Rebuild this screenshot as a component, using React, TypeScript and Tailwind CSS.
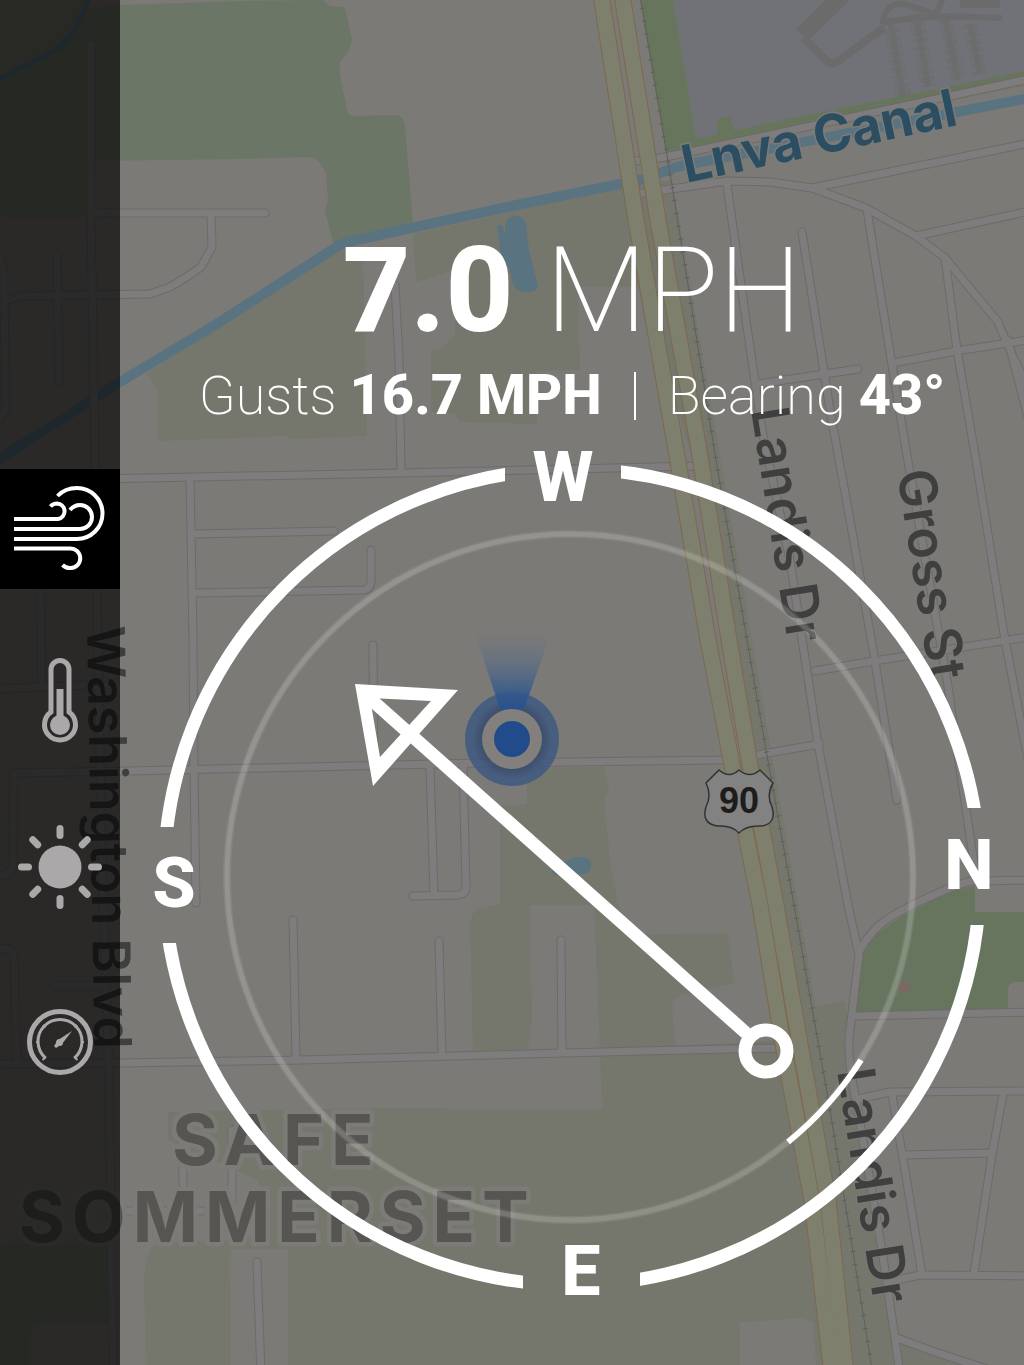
import type { ReactNode } from 'react';

const local = [
  'M91 44 L91 215 L95 460 L97 600 L103 900 L109 1080 L113 1365',
  'M92 216 Q96 212 110 213 L265 213',
  'M211 214 L212 247 L201 267 Q186 278 170 287 L150 294 L20 296 L4 301 L6 410 L-4 425',
  'M0 258 L4 275 L4 301',
  'M57 255 L59 382',
  'M395 285 L399 360 L401 472',
  'M97 479 L400 473 L695 466',
  'M190 478 L193 640 L194 770 L196 903',
  'M192 534 L334 531',
  'M192 593 L364 590 Q371 589 371 580 V550',
  'M373 645 L374 770',
  'M0 875 Q13 875 13 865 L14 773 L130 771 L480 763 L720 760 L745 757 L820 744',
  'M430 767 L434 895',
  'M463 766 L466 885 Q467 894 458 895 L413 896',
  'M293 920 L296 1058',
  'M439 941 L442 1056',
  'M561 940 L562 1052',
  'M-4 1064 L120 1063 L300 1060 L640 1051 L780 1048',
  'M257 1262 L261 1375',
  'M0 948 Q14 948 14 958 L17 1062',
  'M54 986 H104',
  'M40 588 L42 687 M-4 689 L94 685',
  'M182 1130 L183 1184 M232 1130 V1200 M128 1211 H202',
  'M635 161 L655 159 L690 152 L1034 78',
  'M636 194 L727 181 L770 182 L812 188 L866 208 L916 236 L945 258 L998 322 Q1007 345 1030 392',
  'M812 188 L1034 142',
  'M916 236 L1034 210',
  'M727 185 L746 320 L762 430 L790 560 L818 744 L848 905 L859 955 L850 1030 Q846 1052 856 1100 L882 1250 L895 1338 L900 1375',
  'M802 232 L830 410 L850 520 L874 655 L897 800',
  'M867 210 L892 365 L906 450 L947 680 L975 870',
  'M945 258 L957 350 L976 460 L1005 640 L1034 790',
  'M1008 340 L1030 425',
  'M758 384 L858 369',
  'M893 363 L956 351 L1034 339',
  'M815 671 L874 661 L1034 636',
  'M860 950 Q868 935 882 923 Q900 910 925 899 Q955 885 972 881 L1034 880',
  'M855 1016 L1034 1012',
  'M858 1099 L890 1092 L1034 1091',
  'M892 1095 L905 1170 L922 1275',
  'M1003 1094 L992 1155 L974 1273',
  'M904 1155 L992 1153',
  'M888 1282 L920 1275 L1034 1276',
  'M897 1338 L935 1352 L990 1370',
];

const highway = [
  'M601 -5 L636 220 L676 450 L708 640 L732 765 L760 905 L784 1050 L812 1200 L832 1375',
  'M622 -5 L658 220 L699 450 L729 640 L750 765 L776 905 L801 1050 L828 1200 L846 1375',
];

const rail = 'M640 -5 L672 185 L716 460 L766 750 L794 905 L830 1110 L873 1375';

const stalls = ['M890 20 L903 96', 'M916 14 L928 86', 'M945 18 L958 80', 'M970 24 L980 74'];

function MapLabel({ x, y, angle, children }: { x: number; y: number; angle: number; children: ReactNode }) {
  return <text transform={`translate(${x} ${y}) rotate(${angle})`}>{children}</text>;
}

function MapBackdrop() {
  return (
    <svg
      viewBox="0 0 1024 1365"
      preserveAspectRatio="xMidYMid slice"
      className="absolute inset-0 h-full w-full font-['Inter',sans-serif]"
      aria-label="Map"
    >
      <defs>
        <linearGradient id="beam" x1="0" y1="1" x2="0" y2="0">
          <stop offset="0" stopColor="#26508f" />
          <stop offset="0.25" stopColor="#34588c" stopOpacity="0.85" />
          <stop offset="0.6" stopColor="#50688a" stopOpacity="0.5" />
          <stop offset="1" stopColor="#66718a" stopOpacity="0" />
        </linearGradient>
        <radialGradient id="halo">
          <stop offset="0.6" stopColor="#334764" stopOpacity="0.9" />
          <stop offset="0.85" stopColor="#3b5782" stopOpacity="0.8" />
        </radialGradient>
      </defs>
      <rect width="1024" height="1365" fill="#7c7a76" />

      <g fill="#6c7667">
        <path d="M88 8 L120 5 L243 1 L323 0 L330 6 L345 7 L352 40 L348 52 L340 62 Q339 70 341 80 L347 110 Q348 116 356 116 L396 115 Q404 116 405 125 L413 224 L334 246 L325 210 L328 200 L326 173 L320 163 Q314 157 308 157 L240 159 L96 161 L92 217 L20 219 L0 215 V79 L60 46 L80 20 Z" />
        <path d="M0 1244 L111 1242 V1324 L42 1324 Q30 1326 29 1340 V1365 H0 Z" />
      </g>
      <g fill="#75776c">
        <path d="M0 0 H90 L78 22 L60 46 L0 79 Z" />
        <path d="M340 250 L363 256 L367 436 L293 439 L285 436 L160 441 Q157 441 157 430 L157 390 L147 373 Z" />
        <path d="M413 234 L625 186 L640 287 L578 287 L580 370 L537 371 V424 L460 422 L455 414 L431 412 V350 L441 349 L455 335 L455 270 L416 282 Z" />
        <path d="M527 768 L604 767 L609 790 L604 800 L610 860 L618 905 L627 935 L728 933 L734 983 L680 996 Q672 998 672 1008 L676 1046 L780 1040 L812 1007 L845 1001 L850 1040 L858 1100 L895 1365 H816 L813 1322 L800 1318 L765 1321 L740 1322 V1365 H288 V1249 H230 L231 1365 H146 L144 1280 Q146 1245 158 1243 L231 1240 L258 1236 V1180 L168 1140 V1112 L376 1108 L596 1110 Q602 1110 602 1104 L594 905 H530 L532 1020 L528 1049 L473 1051 L470 925 Q472 908 482 908 L500 904 V806 L527 804 Z" />
        <path d="M640 287 L625 186 L672 180 L720 455 L798 905 L834 1110 L874 1365 H845 L770 905 L690 450 Z" />
        <path d="M897 1342 L980 1370 H900 Z" />
      </g>

      <path d="M640 0 H1024 V86 L668 158 Z" fill="#77786a" />
      <path d="M640 0 H676 L698 138 L717 134 V119 L730 116 L734 130 L1024 71 V79 L698 146 L666 152 Z" fill="#67755c" />
      <path d="M673 0 H1024 V71 L734 130 L730 116 L717 119 V134 L696 139 Z" fill="#717277" />
      <g stroke="#6b6b6c" fill="none">
        <path d="M844 -6 L802 35" strokeWidth="17" />
        <path d="M804 38 L828 62 Q834 66 842 58 L884 28" strokeWidth="8" />
        <path d="M882 24 Q886 2 904 4 L936 14 L944 -4 M882 22 L940 16 L1002 18" strokeWidth="6" />
        <path d="M960 3 H1000" strokeWidth="10" />
        {stalls.map((d) => (
          <g key={d}>
            <path d={d} strokeWidth="6" opacity="0.8" />
            <path d={d} strokeWidth="15" strokeDasharray="5 3" opacity="0.5" />
          </g>
        ))}
      </g>

      <path d="M860 958 L875 935 L905 914 L950 892 L975 886 V912 H1024 V982 H1015 Q1008 983 1008 990 V1010 L855 1012 Z" fill="#67755f" />
      <path d="M899 984 L905 980 L911 987 L905 994 L897 989 Z" fill="#7a6a61" />

      <g fill="none" stroke="#5a7380">
        <path d="M-6 462 L45 430 L110 388 L215 325 L335 248 Q342 243 352 241 L512 206 L640 180 L680 166 L1034 97" strokeWidth="10" />
        <path d="M-4 81 L55 50 Q70 40 79 20 L92 -6" strokeWidth="5" />
      </g>
      <g fill="#5a7380">
        <path d="M497 226 Q500 223 503 227 L509 252 L508 268 L502 262 Z" />
        <path d="M505 226 Q506 217 516 216 Q524 216 526 224 L529 250 L538 286 Q538 291 530 292 Q516 294 512 282 L506 250 Z" />
        <path d="M552 868 L572 858 L584 857 Q592 858 591 866 Q591 873 584 874 L560 876 Q550 875 552 868 Z" />
      </g>

      <g fill="none" strokeLinecap="round" strokeLinejoin="round">
        {local.map((d) => (
          <path key={d} d={d} stroke="#6e6a68" strokeWidth="9" />
        ))}
        {local.map((d) => (
          <path key={d} d={d} stroke="#7e7c7d" strokeWidth="7" />
        ))}
      </g>

      <g fill="none" strokeLinejoin="round">
        {highway.map((d) => (
          <path key={d} d={d} stroke="#7d6850" strokeWidth="17" />
        ))}
        {highway.map((d) => (
          <path key={d} d={d} stroke="#7f7f6d" strokeWidth="15" />
        ))}
        <path d={rail} stroke="#5f5f5d" strokeWidth="1" />
        <path d={rail} stroke="#5f5f5d" strokeWidth="5" strokeDasharray="1 12" />
      </g>

      <g stroke="#7c7b77" strokeLinejoin="round">
        <g className="fill-[#2c4e62] text-[52px] font-bold [paint-order:stroke]" strokeWidth="3">
          <MapLabel x={686} y={183} angle={-12}>
            Lnva Canal
          </MapLabel>
        </g>
        <g className="fill-[#3f3f3f] text-[52px] font-semibold [paint-order:stroke]" strokeWidth="2">
          <MapLabel x={87} y={626} angle={89}>
            Washington Blvd
          </MapLabel>
          <MapLabel x={751} y={410} angle={81}>
            Landis Dr
          </MapLabel>
          <MapLabel x={897} y={472} angle={81}>
            Gross St
          </MapLabel>
          <MapLabel x={837} y={1071} angle={81}>
            Landis Dr
          </MapLabel>
        </g>
        <g className="fill-[#565552] text-[70px] font-bold tracking-widest [paint-order:stroke]" strokeWidth="9">
          <MapLabel x={172} y={1165} angle={0}>
            SAFE
          </MapLabel>
          <MapLabel x={19} y={1242} angle={0}>
            SOMMERSET
          </MapLabel>
        </g>
      </g>

      <path
        d="M719 770 Q729 779 739 770 Q750 779 760 770 L773 783 Q766 795 772 807 Q777 823 762 826 Q746 825 739 833 Q732 825 717 826 Q701 823 706 807 Q712 795 706 783 Z"
        fill="#828282"
        stroke="#333333"
        strokeWidth="1.5"
      />
      <text x="739" y="813" textAnchor="middle" className="fill-[#1d1d1d] font-['Liberation_Sans',sans-serif] text-[36px] font-bold">
        90
      </text>

      <circle cx="512" cy="739" r="47" fill="url(#halo)" />
      <path d="M501 712 L523 712 L552 630 H474 Z" fill="url(#beam)" />
      <circle cx="512" cy="739" r="30" fill="#827f7c" />
      <circle cx="512" cy="739" r="18" fill="#224b8c" />
    </svg>
  );
}

function WindIcon() {
  return (
    <svg viewBox="0 0 120 120" className="size-[120px]" fill="none" stroke="white" strokeWidth="4" aria-hidden="true">
      <path d="M14 50 H58 A7.8 7.8 0 0 0 57 34.500 Q53 34.500 50.500 37.500" />
      <path d="M14 60 H80 A12 12 0 0 0 80 36 Q74 36 70 41" />
      <path d="M14 70 H77 A25.500 25.500 0 0 0 77 19 Q65 19 57.500 27" />
      <path d="M14 79.500 H70 A9.500 9.500 0 0 1 71 99 Q66 99.500 62.500 96" />
    </svg>
  );
}

function ThermometerIcon() {
  return (
    <svg viewBox="0 0 86 86" className="size-[86px]" fill="none" stroke="#aaa8a9" aria-hidden="true">
      <path d="M34 54 V11.500 A9 9 0 0 1 52 11.500 V54 A15.500 15.500 0 1 1 34 54 Z" strokeWidth="5" />
      <path d="M43 31 V66" strokeWidth="7" />
      <circle cx="43" cy="67" r="10" fill="#aaa8a9" stroke="none" />
    </svg>
  );
}

function SunIcon() {
  return (
    <svg viewBox="0 0 86 86" className="size-[86px]" stroke="#aaa8a9" strokeWidth="7" strokeLinecap="round" aria-hidden="true">
      <circle cx="43" cy="43" r="21.500" fill="#aaa8a9" stroke="none" />
      {[0, 45, 90, 135, 180, 225, 270, 315].map((a) => (
        <path key={a} d="M43 4.500 V11.500" transform={`rotate(${a} 43 43)`} />
      ))}
    </svg>
  );
}

function GaugeIcon() {
  return (
    <svg viewBox="0 0 66 66" className="size-[66px]" fill="none" stroke="#aaa8a9" aria-hidden="true">
      <circle cx="33" cy="33" r="30.500" strokeWidth="5" />
      <path d="M18.500 49 A22 22 0 1 1 47.500 49" strokeWidth="3" />
      <path d="M19 48 L15.500 51 M47 48 L50.500 51 M9 33 H12 M54 33 H57 M33 9 V12 M16 16 L18.500 18.500 M50 16 L47.500 18.500" strokeWidth="2" />
      <path d="M45 22 L35 35 L29 39 L27 37 L31 31 Z" fill="#aaa8a9" stroke="none" />
      <circle cx="32.500" cy="33.500" r="3.500" fill="#aaa8a9" stroke="none" />
    </svg>
  );
}

function Sidebar() {
  return (
    <nav aria-label="Conditions" className="relative w-[120px] shrink-0 bg-black/66 pt-[469px]">
      <ul className="flex flex-col items-center">
        <li>
          <button type="button" aria-label="Wind" aria-pressed="true" className="block bg-black">
            <WindIcon />
          </button>
        </li>
        <li className="pt-[69px]">
          <button type="button" aria-label="Temperature" className="block">
            <ThermometerIcon />
          </button>
        </li>
        <li className="pt-20">
          <button type="button" aria-label="Sunlight" className="block">
            <SunIcon />
          </button>
        </li>
        <li className="pt-[99px]">
          <button type="button" aria-label="Pressure" className="block">
            <GaugeIcon />
          </button>
        </li>
      </ul>
    </nav>
  );
}

function Compass() {
  return (
    <svg
      viewBox="120 420 904 900"
      className="block h-auto w-full font-['Roboto',sans-serif]"
      role="img"
      aria-label="Wind compass"
    >
      <defs>
        <mask id="gaps" maskUnits="userSpaceOnUse" x="120" y="420" width="904" height="900">
          <rect x="120" y="420" width="904" height="900" fill="white" />
          <rect x="505" y="440" width="116" height="60" fill="black" />
          <rect x="523" y="1240" width="117" height="60" fill="black" />
          <rect x="140" y="827" width="60" height="116" fill="black" />
          <rect x="950" y="808" width="60" height="117" fill="black" />
        </mask>
      </defs>
      <circle cx="572" cy="877" r="408" fill="none" stroke="white" strokeWidth="13" mask="url(#gaps)" />
      <circle cx="570" cy="877" r="343" fill="none" stroke="white" strokeOpacity="0.08" strokeWidth="8" />
      <circle cx="570" cy="877" r="343" fill="none" stroke="white" strokeOpacity="0.12" strokeWidth="5" />
      <path d="M861 1060 A343 343 0 0 1 788 1142" fill="none" stroke="white" strokeWidth="6" />
      <g className="fill-white text-[70px] font-extrabold" textAnchor="middle">
        <text x="563" y="501">
          W
        </text>
        <text x="969" y="889">
          N
        </text>
        <text x="174" y="907">
          S
        </text>
        <text x="581" y="1295">
          E
        </text>
      </g>
      <path d="M355 684 L458 690 L373 786 Z M370 698 L380 757 L431 701 Z" fill="white" fillRule="evenodd" />
      <path d="M366 695 L746 1033" stroke="white" strokeWidth="13" />
      <circle cx="766" cy="1051" r="21" fill="none" stroke="white" strokeWidth="13" />
    </svg>
  );
}

export default function App() {
  return (
    <div className="relative flex min-h-screen overflow-hidden text-white">
      <MapBackdrop />
      <Sidebar />
      <main className="relative min-w-0 flex-1">
        <header className="flex h-[420px] flex-col items-center justify-end font-['Roboto',sans-serif]">
          <h1 className="flex items-baseline gap-8 text-[118px] leading-[160px] font-extralight">
            <strong className="font-extrabold">7.0</strong>
            <span>MPH</span>
          </h1>
          <div className="flex items-center gap-8 text-[54px] leading-12 font-extralight whitespace-nowrap">
            <p>
              Gusts <strong className="text-[56px] font-extrabold">16.7 MPH</strong>
            </p>
            <span className="h-12 w-0.5 bg-white" />
            <p>
              Bearing <strong className="text-[56px] font-extrabold">43°</strong>
            </p>
          </div>
        </header>
        <Compass />
      </main>
    </div>
  );
}
